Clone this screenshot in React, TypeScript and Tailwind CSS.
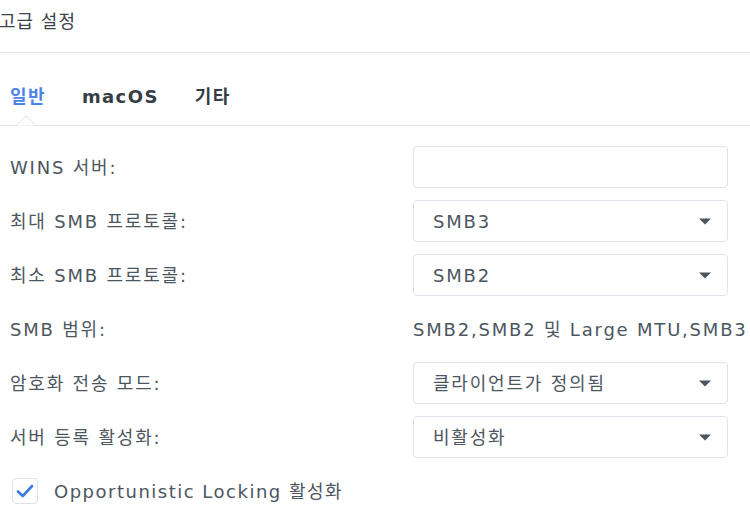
import { useState } from "react";

const FONT = {
  fontFamily: '"DejaVu Sans", "Noto Sans CJK KR", sans-serif',
};

function Caret() {
  return (
    <svg width="14" height="8" viewBox="0 0 14 8" className="shrink-0">
      <path d="M1 1.5 H13 L7 7.5 Z" fill="#4b5560" />
    </svg>
  );
}

function SelectBox({ value }: { value: string }) {
  return (
    <div className="flex h-[42px] w-[315px] items-center justify-between rounded-[4px] border border-[#dfe3e9] bg-white pl-[19px] pr-[15px]">
      <span>{value}</span>
      <Caret />
    </div>
  );
}

export default function App() {
  const [tab, setTab] = useState("일반");
  const [oplock, setOplock] = useState(true);
  const tabs = ["일반", "macOS", "기타"];

  const rows: { label: string; field: React.ReactNode }[] = [
    {
      label: "WINS 서버:",
      field: (
        <input
          type="text"
          className="h-[42px] w-[315px] rounded-[4px] border border-[#dfe3e9] bg-white px-[19px] outline-none"
        />
      ),
    },
    { label: "최대 SMB 프로토콜:", field: <SelectBox value="SMB3" /> },
    { label: "최소 SMB 프로토콜:", field: <SelectBox value="SMB2" /> },
    {
      label: "SMB 범위:",
      field: <span className="whitespace-nowrap">SMB2,SMB2 및 Large MTU,SMB3</span>,
    },
    { label: "암호화 전송 모드:", field: <SelectBox value="클라이언트가 정의됨" /> },
    { label: "서버 등록 활성화:", field: <SelectBox value="비활성화" /> },
  ];

  return (
    <div
      className="h-[516px] w-[750px] overflow-hidden bg-white text-[18px] tracking-[1.8px] text-[#4c5660]"
      style={FONT}
    >
      <div className="flex h-[53px] items-center border-b border-[#e3e7ec] pb-[10px] text-[#3b444d]">
        <span className="-ml-[1px] tracking-[1px]">고급 설정</span>
      </div>

      <div className="relative flex h-[73px] items-center gap-[36px] border-b border-[#dfe3e9] pl-[10px] pt-[15px]">
        {tabs.map((t) => (
          <button
            key={t}
            onClick={() => setTab(t)}
            className={`font-bold tracking-[1.4px] ${t === tab ? "text-[#4c84ea]" : "text-[#353d45]"}`}
          >
            {t}
          </button>
        ))}
        <svg
          width="20"
          height="11"
          viewBox="0 0 20 11"
          className="absolute -bottom-[1px] left-[16px]"
        >
          <path d="M0 10.5 L10 1 L20 10.5" fill="white" stroke="#dfe3e9" strokeWidth="1" />
        </svg>
      </div>

      <div className="flex flex-col gap-[12px] pl-[10px] pt-[20px]">
        {rows.map((r) => (
          <div key={r.label} className="flex h-[42px] items-center">
            <span className="w-[403px] shrink-0">{r.label}</span>
            {r.field}
          </div>
        ))}
        <label className="flex h-[42px] cursor-pointer items-center gap-[16px] pl-[2px]">
          <span
            onClick={() => setOplock(!oplock)}
            className="flex h-[26px] w-[26px] items-center justify-center rounded-[4px] border border-[#dfe3e9] bg-white"
          >
            {oplock && (
              <svg width="18" height="14" viewBox="0 0 18 14">
                <path
                  d="M2 7.5 L6.8 12 L16 2"
                  fill="none"
                  stroke="#3f7ae6"
                  strokeWidth="2.6"
                  strokeLinecap="round"
                  strokeLinejoin="round"
                />
              </svg>
            )}
          </span>
          <span className="tracking-[1.5px]">Opportunistic Locking 활성화</span>
        </label>
      </div>
    </div>
  );
}
